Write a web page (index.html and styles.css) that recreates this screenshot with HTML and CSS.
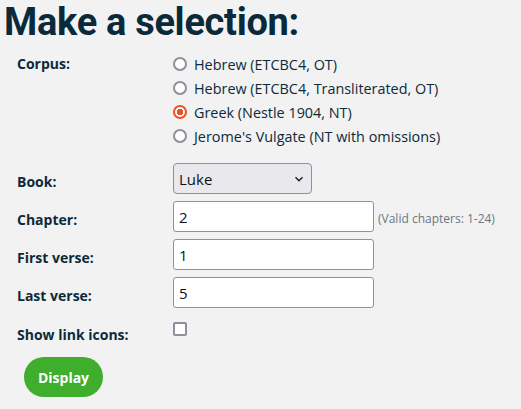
FILE: index.html
```html
<!DOCTYPE html>
<html>
<head>
<meta charset="utf-8">
<link rel="stylesheet" href="styles.css">
</head>
<body>
<h1 class="title">Make a selection:</h1>
<form class="form">
  <div class="row row-corpus">
    <div class="label">Corpus:</div>
    <div class="radios">
      <label class="radio-line"><input type="radio" name="corpus" class="radio"><span>Hebrew (ETCBC4, OT)</span></label>
      <label class="radio-line"><input type="radio" name="corpus" class="radio"><span>Hebrew (ETCBC4, Transliterated, OT)</span></label>
      <label class="radio-line"><input type="radio" name="corpus" class="radio" checked><span>Greek (Nestle 1904, NT)</span></label>
      <label class="radio-line"><input type="radio" name="corpus" class="radio"><span>Jerome's Vulgate (NT with omissions)</span></label>
    </div>
  </div>
  <div class="row row-book">
    <div class="label">Book:</div>
    <div class="select-wrap">
      <select class="select"><option>Luke</option></select>
      <svg class="chevron" width="10" height="6" viewBox="0 0 10 6"><path d="M1.5 1.2 L5 4.7 L8.5 1.2" fill="none" stroke="#1b1b1b" stroke-width="1.4"/></svg>
    </div>
  </div>
  <div class="row">
    <div class="label">Chapter:</div>
    <input class="text" type="text" value="2">
    <span class="hint">(Valid chapters: 1-24)</span>
  </div>
  <div class="row">
    <div class="label">First verse:</div>
    <input class="text" type="text" value="1">
  </div>
  <div class="row">
    <div class="label">Last verse:</div>
    <input class="text" type="text" value="5">
  </div>
  <div class="row row-check">
    <div class="label">Show link icons:</div>
    <input class="check" type="checkbox">
  </div>
  <div class="actions">
    <button type="button" class="btn">Display</button>
  </div>
</form>
</body>
</html>
```
FILE: styles.css
```css
html, body {
  margin: 0;
  padding: 0;
  background: #f2f2f2;
}
body {
  font-family: "Open Sans", "Noto Sans", sans-serif;
  color: #0d2a3b;
  padding: 0 4px;
}
.title {
  margin: 0;
  font-family: Roboto, "Open Sans", sans-serif;
  font-size: 38px;
  line-height: 45px;
  font-weight: 700;
  color: #0a2a3c;
  letter-spacing: -0.3px;
}
.form {
  padding: 7px 0 0 13px;
}
.row {
  display: flex;
  align-items: center;
  margin-bottom: 7px;
}
.label {
  width: 156px;
  flex: none;
  font-weight: 700;
  font-size: 14px;
  padding-top: 6px;
}
.row-corpus {
  align-items: flex-start;
  margin-bottom: 15px;
}
.row-corpus .label {
  padding-top: 2px;
}
.radios {
  display: flex;
  flex-direction: column;
}
.radio-line {
  display: flex;
  align-items: center;
  height: 24px;
  font-size: 14.4px;
  gap: 7px;
}
.radio {
  appearance: none;
  -webkit-appearance: none;
  margin: 0;
  width: 14px;
  height: 14px;
  border: 2px solid #8f8f9d;
  border-radius: 50%;
  background: #fff;
  box-sizing: border-box;
}
.radio:checked {
  border-color: #e8531e;
  background: radial-gradient(circle, #e8531e 0 3px, #fff 3.5px);
}
.select-wrap {
  position: relative;
}
.select {
  appearance: none;
  -webkit-appearance: none;
  width: 139px;
  height: 31px;
  box-sizing: border-box;
  border: 1px solid #8f8f9d;
  border-radius: 4px;
  background: #e9e9ed;
  font-family: inherit;
  font-size: 15px;
  color: #111;
  padding: 0 0 0 5px;
  margin: 0;
}
.chevron {
  position: absolute;
  right: 8px;
  top: 13px;
  pointer-events: none;
}
.text {
  width: 201px;
  height: 31px;
  box-sizing: border-box;
  border: 1px solid #8f8f9d;
  border-radius: 3px;
  background: #fff;
  font-family: inherit;
  font-size: 15px;
  color: #111;
  padding: 0 5px;
  margin: 0;
}
.hint {
  font-size: 12px;
  color: #6b7680;
  margin-left: 4px;
  padding-top: 4px;
}
.row-check {
  margin-top: 14px;
  align-items: flex-start;
}
.row-check .label {
  padding-top: 3px;
}
.check {
  appearance: none;
  -webkit-appearance: none;
  margin: 0;
  width: 14px;
  height: 14px;
  border: 2px solid #8f8f9d;
  border-radius: 2px;
  background: #fff;
  box-sizing: border-box;
}
.actions {
  padding: 6px 0 0 7px;
}
.btn {
  width: 79px;
  height: 40px;
  border: none;
  border-radius: 20px;
  background: #3eae2c;
  color: #fff;
  font-family: inherit;
  font-weight: 700;
  font-size: 14px;
  padding: 0;
}
```
